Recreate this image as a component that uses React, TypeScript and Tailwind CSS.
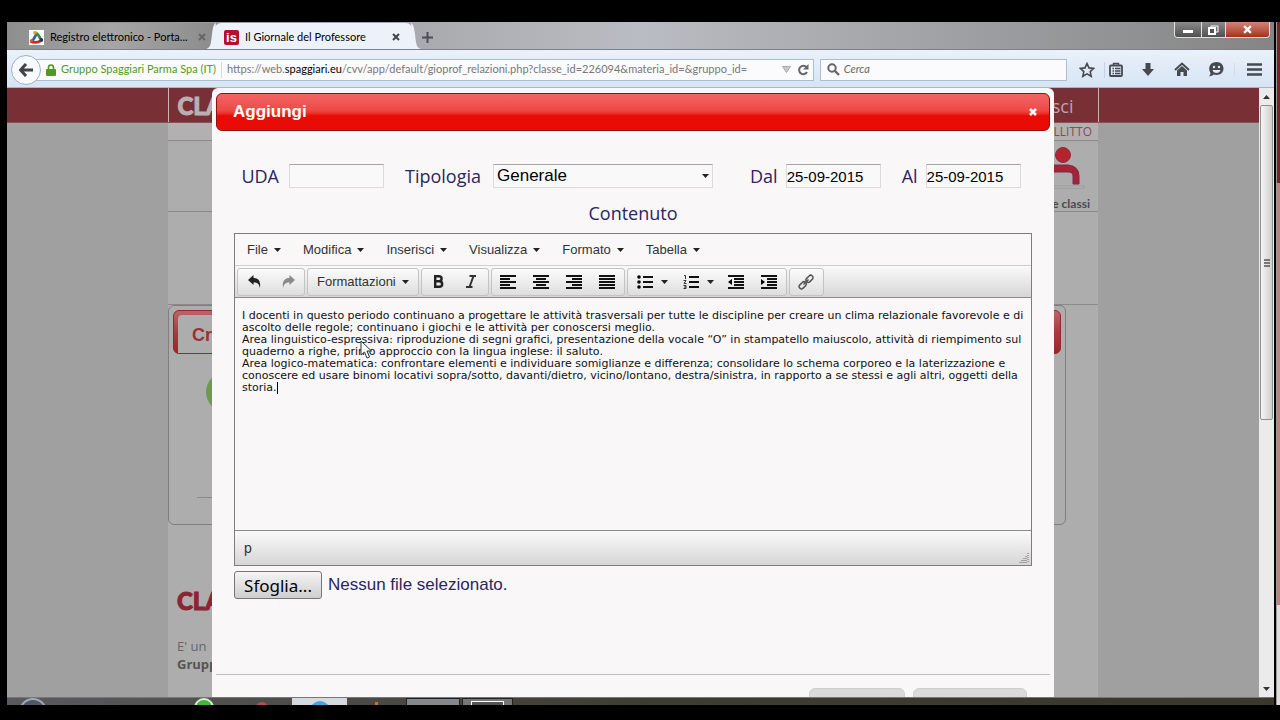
import React, { useRef } from 'react';

const ui = "font-['Open_Sans','Noto_Sans',sans-serif]";
const chrome = "font-['Lato','Open_Sans',sans-serif]";
const arial = "font-['Liberation_Sans',Arial,sans-serif]";

const Caret = () => (
  <svg width="7" height="4" viewBox="0 0 7 4" className="shrink-0">
    <path d="M0 0h7L3.500 4z" fill="#222" />
  </svg>
);

const CloseX = ({ color, size = 8 }: { color: string; size?: number }) => (
  <svg width={size} height={size} viewBox="0 0 8 8" className="shrink-0">
    <path d="M1 1l6 6M7 1L1 7" stroke={color} strokeWidth="2" />
  </svg>
);

/* ---------- browser chrome ---------- */

const WindowControls = () => (
  <div className="flex h-4 self-start overflow-hidden rounded-b-[4px] border border-t-0 border-[#e0e0e0] mr-1">
    <button aria-label="Riduci" className="flex w-[26px] items-center justify-center bg-linear-to-b from-[#8c8c8c] to-[#505050]">
      <span className="mt-1 h-[3px] w-[10px] bg-white" />
    </button>
    <button aria-label="Ripristina" className="flex w-[25px] items-center justify-center border-x border-[#e0e0e0] bg-linear-to-b from-[#8c8c8c] to-[#505050]">
      <svg width="11" height="10" viewBox="0 0 11 10">
        <path d="M3 2V1h7v6H8" fill="none" stroke="#fff" strokeWidth="1" />
        <rect x="1" y="3" width="6" height="6" fill="#555" stroke="#fff" strokeWidth="2" />
      </svg>
    </button>
    <button aria-label="Chiudi finestra" className="flex w-[43px] items-center justify-center bg-linear-to-b from-[#cf8478] to-[#a82d1a]">
      <CloseX color="#fff" size={9} />
    </button>
  </div>
);

const TabBar = () => (
  <div
    className={`flex h-7 items-end border-b border-[#7c8088] bg-linear-to-r from-[#8a8a8a] via-[#b9bcc2] to-[#858585] text-[11px] text-black ${chrome}`}
  >
    <div className="flex h-[26px] w-[208px] items-center rounded-t bg-linear-to-r from-[#8e8e8e] via-[#a6a6a6] to-[#8c8c8c] pt-[2px] pl-[22px] pr-[9px]">
      <svg width="15" height="15" viewBox="0 0 15 15" className="mr-[6px] shrink-0">
        <rect width="15" height="15" fill="#fff" />
        <path d="M8 3L3.500 11" stroke="#2f5fb5" strokeWidth="2.600" />
        <path d="M6 2.500q4 2 5.500 6.500" fill="none" stroke="#2f8f3c" strokeWidth="2.600" />
        <path d="M1.500 11.500q5 2 10-.5" fill="none" stroke="#d3261f" strokeWidth="2.600" />
        <circle cx="6" cy="2.800" r="1.800" fill="#d9a41c" />
        <circle cx="12.300" cy="10" r="1.900" fill="#2b2a66" />
        <circle cx="2.500" cy="10.500" r="1.600" fill="#e0571c" />
      </svg>
      <span className="flex-1 whitespace-nowrap">Registro elettronico - Porta...</span>
      <button aria-label="Chiudi scheda">
        <CloseX color="#666" />
      </button>
    </div>
    <div className="relative flex h-[26px] w-[197px] items-center rounded-t-[6px] bg-[#edf2fa] pt-[2px] pl-[9px] pr-3">
      <svg width="10" height="26" viewBox="0 0 10 27" className="absolute bottom-0 -left-[9px]">
        <path d="M0 27C5 26 5 20 6 12 7 4 8 1 10 0v27z" fill="#edf2fa" />
      </svg>
      <svg width="10" height="26" viewBox="0 0 10 27" className="absolute bottom-0 -right-[9px]">
        <path d="M10 27C5 26 5 20 4 12 3 4 2 1 0 0v27z" fill="#edf2fa" />
      </svg>
      <span
        aria-hidden="true"
        className={`mr-[6px] flex size-[15px] items-center justify-center rounded-[2px] bg-[#b3122e] text-[13px] leading-none font-bold text-white ${arial}`}
      >
        is
      </span>
      <span className="flex-1 whitespace-nowrap">Il Giornale del Professore</span>
      <button aria-label="Chiudi scheda">
        <CloseX color="#444" />
      </button>
    </div>
    <button aria-label="Nuova scheda" className="ml-[10px] flex h-[26px] w-5 items-center pt-[2px]">
      <svg width="11" height="11" viewBox="0 0 11 11">
        <path d="M5.500 0v11M0 5.500h11" stroke="#4c4f55" strokeWidth="2" />
      </svg>
    </button>
    <div className="flex-1" />
    <WindowControls />
  </div>
);

const NavIcons = () => (
  <div className="flex items-center text-[#454a50]">
    <button aria-label="Preferiti" className="w-[29px] pl-1">
      <svg width="16" height="16" viewBox="0 0 16 16">
        <path d="M8 1.500l2 4.400 4.700.5-3.500 3.200 1 4.700L8 11.900l-4.200 2.400 1-4.700L1.300 6.400 6 5.900z" fill="none" stroke="currentColor" strokeWidth="1.600" />
      </svg>
    </button>
    <button aria-label="Segnalibri" className="w-[33px] border-l border-[#c6d2e0] pl-1">
      <svg width="14" height="16" viewBox="0 0 14 16">
        <rect x="1" y="3.500" width="12" height="10.500" rx="1" fill="none" stroke="currentColor" strokeWidth="1.800" />
        <path d="M4.500 3V1.500h5V3M3.500 6.500h1.500M6 6.500h5.500M3.500 9h1.500M6 9h5.500M3.500 11.500h1.500M6 11.500h5.500" fill="none" stroke="currentColor" strokeWidth="1.400" />
      </svg>
    </button>
    <button aria-label="Download" className="w-[33px] pl-1">
      <svg width="14" height="14" viewBox="0 0 14 14">
        <path d="M4.500 0h5v6H13L7 13 1 6h3.500z" fill="currentColor" />
      </svg>
    </button>
    <button aria-label="Pagina iniziale" className="w-[34px] pl-1">
      <svg width="16" height="15" viewBox="0 0 16 15">
        <path d="M1 8l7-6.500L15 8" fill="none" stroke="currentColor" strokeWidth="2" />
        <path d="M3 8.500l5-4.500 5 4.500V14H9.500v-4h-3v4H3z" fill="currentColor" />
      </svg>
    </button>
    <button aria-label="Chat" className="w-[30px] pl-1">
      <svg width="16" height="15" viewBox="0 0 16 15">
        <path d="M8.500 0C12.600 0 15.500 2.800 15.500 6.500S12.600 13 8.500 13c-1 0-2-.2-2.900-.5C4.500 13.600 2.500 14.500 1 14.200c1-.8 1.500-2 1.500-3.200C1.800 9.800 1.200 8.200 1.200 6.500 1.200 2.800 4.400 0 8.500 0z" fill="currentColor" />
        <circle cx="6" cy="5" r="1.200" fill="#e3edf8" />
        <circle cx="11" cy="5" r="1.200" fill="#e3edf8" />
        <path d="M4.500 8h8c-.5 2-2 3-4 3s-3.500-1-4-3z" fill="#e3edf8" />
      </svg>
    </button>
    <button aria-label="Menu" className="border-l border-[#d2dce8] pl-3">
      <svg width="15" height="13" viewBox="0 0 15 13">
        <path d="M0 1.500h15M0 6.500h15M0 11.500h15" stroke="currentColor" strokeWidth="2.400" />
      </svg>
    </button>
  </div>
);

const NavBar = () => (
  <div className={`flex h-[38px] items-center border-b border-[#a9b6c6] bg-linear-to-b from-[#eaf1fa] to-[#d6e4f4] pt-[2px] pl-1 pr-3 text-[11px] ${chrome}`}>
    <button
      aria-label="Indietro"
      className="z-10 -mr-[2px] flex size-[30px] shrink-0 items-center justify-center rounded-full border border-[#9fb0c4] bg-[#f7f9fc]"
    >
      <svg width="14" height="14" viewBox="0 0 14 14">
        <path d="M7 1L1.500 7 7 13M2 7h12" fill="none" stroke="#3f444a" strokeWidth="3" />
      </svg>
    </button>
    <div className="-ml-1 flex h-[22px] flex-[779] items-center border border-[#a9bfd6] bg-[#fbfbfd] pl-[10px]">
      <svg width="10" height="12" viewBox="0 0 10 12" className="mr-[5px] shrink-0">
        <path d="M2.500 6V3.500a2.500 2.500 0 015 0V6" fill="none" stroke="#4f9a1c" strokeWidth="1.600" />
        <rect y="5" width="10" height="7" rx="1" fill="#4f9a1c" />
      </svg>
      <span className="whitespace-nowrap text-[#4f9a1c]">Gruppo Spaggiari Parma Spa (IT)</span>
      <span className="mx-[5px] h-4 w-px bg-[#d5d8dc]" />
      <div role="textbox" aria-label="Indirizzo" className="flex-1 whitespace-nowrap text-[#777]">
        https://web.<span className="text-black">spaggiari.eu</span>
        /cvv/app/default/gioprof_relazioni.php?classe_id=226094&amp;materia_id=&amp;gruppo_id=
      </div>
      <svg width="9" height="7" viewBox="0 0 9 7" className="mr-[6px] shrink-0">
        <path d="M.5.500h8l-4 6z" fill="#c9c9c9" stroke="#aaa" />
      </svg>
      <button aria-label="Ricarica" className="mr-1">
        <svg width="12" height="12" viewBox="0 0 12 12">
          <path d="M9.500 3.200A4.200 4.200 0 1010 8" fill="none" stroke="#666" strokeWidth="2" />
          <path d="M11.500 0v5.500H6z" fill="#666" />
        </svg>
      </button>
    </div>
    <label className="mr-2 ml-[6px] flex h-[22px] flex-[243] items-center border border-[#a9bfd6] bg-[#fbfbfd] pl-[6px]">
      <svg width="13" height="13" viewBox="0 0 13 13" className="mr-1 shrink-0">
        <circle cx="5" cy="5" r="3.700" fill="none" stroke="#666" strokeWidth="2" />
        <path d="M8 8l4 4" stroke="#666" strokeWidth="2.400" />
      </svg>
      <input aria-label="Cerca" placeholder="Cerca" className="w-full min-w-0 bg-transparent outline-none placeholder:text-[#666] placeholder:italic" />
    </label>
    <NavIcons />
  </div>
);

const ScrollBar = () => (
  <div className="flex w-[15px] shrink-0 flex-col items-center bg-[#ebebeb]">
    <button aria-label="Scorri su" className="flex h-[17px] items-center">
      <svg width="7" height="4" viewBox="0 0 7 4">
        <path d="M0 4h7L3.500 0z" fill="#333" />
      </svg>
    </button>
    <div className="flex w-[13px] flex-[315] items-center justify-center rounded-[2px] border border-[#8f8f8f] bg-linear-to-r from-[#f5f5f5] to-[#cfcfcf]">
      <svg width="6" height="8" viewBox="0 0 6 8">
        <path d="M0 1h6M0 4h6M0 7h6" stroke="#555" strokeWidth="1.500" />
      </svg>
    </div>
    <div className="flex-[262]" />
    <button aria-label="Scorri giù" className="flex h-4 items-center">
      <svg width="7" height="4" viewBox="0 0 7 4">
        <path d="M0 0h7L3.500 4z" fill="#333" />
      </svg>
    </button>
  </div>
);

/* ---------- page under the dialog ---------- */

const logo = "font-['Lato',sans-serif] text-2xl font-black [-webkit-text-stroke:1px]";

const PageBehind = () => (
  <div className={`h-full bg-[#a0a0a0] ${ui}`}>
    <div className="h-[35px] border-b border-[#8d5055] bg-[#782f36]">
      <div className="mx-auto flex h-full max-w-[931px] items-center justify-between border-x border-[#c9b5b7] pt-[2px] pr-6 pl-[9px]">
        <span className={`text-[#b9b0b1] ${logo}`}>CLA</span>
        <a href="#esci" className="text-lg text-[#b9a6a8]">sci</a>
      </div>
    </div>
    <div className="mx-auto h-full max-w-[930px] bg-[#adadad]">
      <div className="flex h-[18px] items-center justify-end border-b border-[#8a8a8a] bg-[#b2b0b0] pr-[6px] text-xs text-[#8b4a50]">
        LLITTO
      </div>
      <div className="flex h-[71px] justify-end border-b border-[#8a8a8a] pr-2">
        <div className="flex flex-col items-end justify-between pt-[6px]">
          <svg width="52" height="42" viewBox="0 0 52 42" className="mr-[2px]">
            <circle cx="27" cy="8" r="7.500" fill="#b3242c" stroke="#8c2b45" />
            <path d="M12 18h20q11 1 11 11v8h-6v-8q0-4-5-4H12z" fill="#a52335" stroke="#7d2b50" />
            <path d="M6 39h42v2H6z" fill="#bbb" stroke="#888" strokeWidth=".6" />
          </svg>
          <span className="font-['Lato',sans-serif] text-xs leading-[15px] font-bold text-[#4a4a4a]">e classi</span>
        </div>
      </div>
      <div className="h-[93px] border-b border-[#8a8a8a]" />
      <div className="mr-8 h-[220px] rounded-md border border-[#7f7f7f] p-1">
        <div className="h-11 rounded-md border border-[#8f2a2f] bg-linear-to-b from-[#bb6468] via-[#a83b40] to-[#a02227] pt-1 pl-1">
          <div className={`h-full w-40 rounded-t bg-[#adadad] pt-[6px] pl-[14px] text-lg leading-7 font-bold text-[#a02f33] ${arial}`}>Cr</div>
        </div>
        <div className="pt-[18px] pl-[33px]">
          <div className="size-10 rounded-full bg-[#6f9a4c]" />
        </div>
        <div className="mt-[85px] ml-6 w-40 border-b border-[#8a8a8a]" />
      </div>
      <div className="px-[9px] pt-[60px] text-[13px] leading-[18px] text-[#666]">
        <p className={`mb-5 text-[#8c2532] ${logo}`}>CLA</p>
        <p>E' un</p>
        <p className="font-bold text-[#555]">Grupp</p>
      </div>
    </div>
  </div>
);

/* ---------- editor ---------- */

const menus = ['File', 'Modifica', 'Inserisci', 'Visualizza', 'Formato', 'Tabella'];

interface ToolProps {
  label: string;
  wide?: boolean;
  children: React.ReactNode;
}

const Tool = ({ label, wide, children }: ToolProps) => (
  <button aria-label={label} className={`flex h-[26px] items-center justify-center gap-2 ${wide ? 'w-[46px] pl-1' : 'w-[33px]'}`}>
    {children}
  </button>
);

const ToolGroup = ({ children }: { children: React.ReactNode }) => (
  <div className="flex h-7 shrink-0 rounded-[3px] border border-[#c3c3c3] bg-linear-to-b from-[#fbfbfb] to-[#dedede]">{children}</div>
);

const Lines = ({ d }: { d: string }) => (
  <svg width="16" height="14" viewBox="0 0 16 14">
    <path d={d} stroke="#111" strokeWidth="2" />
  </svg>
);

const Toolbar = () => (
  <div className="flex h-[33px] items-center gap-[2px] overflow-hidden border-y border-t-[#cfcfcf] border-b-[#8b8b8b] bg-linear-to-b from-[#fafafa] to-[#d6d6d6] px-[2px]">
    <ToolGroup>
      <Tool label="Annulla">
        <svg width="14" height="13" viewBox="0 0 14 13">
          <path d="M0 5l5.500-5v3C10 3 13 5.500 12 13 11 9 9.500 7.500 5.500 7.500V10z" fill="#222" />
        </svg>
      </Tool>
      <Tool label="Ripeti">
        <svg width="14" height="13" viewBox="0 0 14 13">
          <path d="M14 5L8.500 0v3C4 3 1 5.500 2 13c1-4 2.500-5.500 6.500-5.500V10z" fill="#8a8a8a" />
        </svg>
      </Tool>
    </ToolGroup>
    <ToolGroup>
      <button className="flex items-center gap-[6px] px-[9px]">
        Formattazioni <Caret />
      </button>
    </ToolGroup>
    <ToolGroup>
      <Tool label="Grassetto">
        <svg width="11" height="13" viewBox="0 0 11 13">
          <path d="M2.200 1.200h3.600q2.800 0 2.800 2.500T5.800 6.300H2.200zM2.200 6.300h4q3 0 3 2.700t-3 2.700h-4z" fill="none" stroke="#222" strokeWidth="2.400" />
        </svg>
      </Tool>
      <Tool label="Corsivo">
        <svg width="12" height="13" viewBox="0 0 12 13">
          <path d="M4.500 1H11M1 12h6.500M8.500 1l-4 11" fill="none" stroke="#333" strokeWidth="2" />
        </svg>
      </Tool>
    </ToolGroup>
    <ToolGroup>
      <Tool label="Allinea a sinistra"><Lines d="M0 1h16M0 4h10M0 7h16M0 10h10M0 13h16" /></Tool>
      <Tool label="Centra"><Lines d="M0 1h16M3 4h10M0 7h16M3 10h10M0 13h16" /></Tool>
      <Tool label="Allinea a destra"><Lines d="M0 1h16M6 4h10M0 7h16M6 10h10M0 13h16" /></Tool>
      <Tool label="Giustifica"><Lines d="M0 1h16M0 4h16M0 7h16M0 10h16M0 13h16" /></Tool>
    </ToolGroup>
    <ToolGroup>
      <Tool label="Elenco puntato" wide>
        <svg width="16" height="14" viewBox="0 0 16 14">
          <path d="M6 2h10M6 7h10M6 12h10" stroke="#111" strokeWidth="2" />
          <circle cx="2" cy="2" r="1.800" />
          <circle cx="2" cy="7" r="1.800" />
          <circle cx="2" cy="12" r="1.800" />
        </svg>
        <Caret />
      </Tool>
      <Tool label="Elenco numerato" wide>
        <svg width="16" height="14" viewBox="0 0 16 14">
          <path d="M6 2h10M6 7h10M6 12h10" stroke="#111" strokeWidth="2" />
          <path d="M1 .5h1.500V4M.5 5.500h2.500L1 8.500h2.500M.5 10.500H3v3H.5M1 12h2" fill="none" stroke="#333" strokeWidth="1" />
        </svg>
        <Caret />
      </Tool>
      <Tool label="Riduci rientro">
        <svg width="16" height="14" viewBox="0 0 16 14">
          <path d="M0 1h16M6 4h10M6 7h10M6 10h10M0 13h16" stroke="#111" strokeWidth="2" />
          <path d="M4 4v6L0 7z" />
        </svg>
      </Tool>
      <Tool label="Aumenta rientro">
        <svg width="16" height="14" viewBox="0 0 16 14">
          <path d="M0 1h16M6 4h10M6 7h10M6 10h10M0 13h16" stroke="#111" strokeWidth="2" />
          <path d="M0 4v6l4-3z" />
        </svg>
      </Tool>
    </ToolGroup>
    <ToolGroup>
      <Tool label="Inserisci link">
        <svg width="16" height="16" viewBox="0 0 16 16" fill="none" stroke="#555" strokeWidth="1.500">
          <rect x="7.500" y="2.500" width="8" height="4.600" rx="2.300" transform="rotate(-45 11.500 4.800)" />
          <rect x=".7" y="9" width="8" height="4.600" rx="2.300" transform="rotate(-45 4.700 11.300)" />
          <path d="M5.500 10.500l5-5" />
        </svg>
      </Tool>
    </ToolGroup>
  </div>
);

const lines = [
  'I docenti in questo periodo continuano a progettare le attività trasversali per tutte le discipline per creare un clima relazionale favorevole e di',
  'ascolto delle regole; continuano i giochi e le attività per conoscersi meglio.',
  'Area linguistico-espressiva: riproduzione di segni grafici, presentazione della vocale “O” in stampatello maiuscolo, attività di riempimento sul',
  'quaderno a righe, primo approccio con la lingua inglese: il saluto.',
  'Area logico-matematica: confrontare elementi e individuare somiglianze e differenza; consolidare lo schema corporeo e la laterizzazione e',
  'conoscere ed usare binomi locativi sopra/sotto, davanti/dietro, vicino/lontano, destra/sinistra, in rapporto a se stessi e agli altri, oggetti della',
  'storia.',
];

const Editor = () => (
  <div className={`border border-[#7d7d7d] text-[13px] text-[#333] ${arial}`}>
    <div className="flex h-[31px] items-center gap-[22px] px-3">
      {menus.map((menu) => (
        <button key={menu} className="flex items-center gap-[6px]">
          {menu}
          <Caret />
        </button>
      ))}
    </div>
    <Toolbar />
    <div className="relative h-[232px] overflow-hidden px-[7px] pt-3">
      <div
        role="textbox"
        aria-label="Contenuto"
        aria-multiline="true"
        className="font-['DejaVu_Sans',Verdana,sans-serif] text-[11px] leading-3 whitespace-nowrap text-[#111]"
      >
        {lines.map((line, i) => (
          <p key={line} className="flex">
            {line}
            {i === lines.length - 1 && <span className="h-3 w-px bg-black" />}
          </p>
        ))}
      </div>
      <svg width="12" height="19" viewBox="0 0 12 19" className="absolute top-[42px] left-[125px]">
        <path d="M1 1v14l3.500-3 2.500 6 2.500-1L7 11h4.500z" fill="#fff" stroke="#333" strokeWidth="1" />
      </svg>
    </div>
    <div className="flex h-[35px] items-center justify-between border-t border-[#8b8b8b] bg-linear-to-b from-[#fafafa] to-[#d6d6d6] pr-[2px] pl-[9px] text-[14px]">
      <span>p</span>
      <svg width="10" height="10" viewBox="0 0 10 10" className="mb-[2px] self-end">
        <path d="M9 0v10M7 3v7M5 5v5M3 7v3M1 9v1" stroke="#666" strokeDasharray="1 1" />
      </svg>
    </div>
  </div>
);

/* ---------- dialog ---------- */

const field = `h-6 border border-[#dcdadc] border-t-[#a5a5a5] bg-[#faf9fa] text-black outline-none ${arial}`;

const FormRow = () => (
  <div className="flex items-center justify-center gap-[21px] pr-1 text-lg">
    <label className="flex items-center gap-[10px]">
      UDA
      <input className={`w-[95px] text-[15px] ${field}`} />
    </label>
    <label className="flex items-center gap-3">
      Tipologia
      <span className="relative flex items-center">
        <select className={`w-[220px] appearance-none pl-[3px] text-[17px] leading-[22px] ${field}`}>
          <option>Generale</option>
        </select>
        <span className="pointer-events-none absolute right-1">
          <Caret />
        </span>
      </span>
    </label>
    <label className="ml-4 flex items-center gap-2">
      Dal
      <input defaultValue="25-09-2015" className={`w-[95px] text-[15px] ${field}`} />
    </label>
    <label className="flex items-center gap-2">
      Al
      <input defaultValue="25-09-2015" className={`w-[95px] text-[15px] ${field}`} />
    </label>
  </div>
);

const FilePicker = () => {
  const fileRef = useRef<HTMLInputElement>(null);

  return (
    <div className={`mt-[5px] flex items-center gap-[6px] text-[17px] ${arial}`}>
      <button
        onClick={() => fileRef.current?.click()}
        className="h-7 w-[88px] rounded-[3px] border border-[#777] bg-linear-to-b from-[#f4f4f4] to-[#cfcfcf] font-['Noto_Sans',sans-serif] leading-none text-black"
      >
        Sfoglia...
      </button>
      <input ref={fileRef} type="file" aria-label="File" className="hidden" />
      <span>Nessun file selezionato.</span>
    </div>
  );
};

const Dialog = () => (
  <div
    role="dialog"
    aria-label="Aggiungi"
    className={`flex h-full w-full max-w-[842px] flex-col rounded-t-md bg-[#f9f7f8] px-1 pt-[5px] text-[#2b2560] ${ui}`}
  >
    <div className={`flex h-[38px] shrink-0 items-center justify-between rounded-md border border-[#8f1010] bg-linear-to-b from-[#f06464] via-[#ee4a47] via-45% to-[#e90b05] to-60% pr-3 pl-4 text-[17px] font-bold text-white ${arial}`}>
      <h1>Aggiungi</h1>
      <button aria-label="Chiudi">
        <svg width="8" height="8" viewBox="0 0 8 8">
          <path d="M1 1l6 6M7 1L1 7" stroke="#fff" strokeWidth="2.600" />
        </svg>
      </button>
    </div>
    <div className="shrink-0 px-[18px] pt-[31px]">
      <FormRow />
      <h2 className="mt-[7px] mb-1 text-center text-lg leading-8">Contenuto</h2>
      <Editor />
      <FilePicker />
    </div>
    <div className="mt-[75px] flex justify-end gap-2 border-t border-[#bdbdbd] pt-[13px] pr-[23px]">
      <button aria-label="Salva" className="h-8 w-24 rounded-md border border-[#cfcfcf] bg-[#dadada]" />
      <button aria-label="Annulla" className="h-8 w-[114px] rounded-md border border-[#cfcfcf] bg-[#dadada]" />
    </div>
  </div>
);

const TaskBar = () => (
  <div className="flex h-2 shrink-0 overflow-hidden border-t border-[#777] bg-linear-to-r from-[#5a5a5e] via-[#3f3d33] to-[#3a372c]">
    <div className="ml-3 size-7 rounded-full border-2 border-[#9ab] bg-[#556]" />
    <div className="ml-[147px] size-5 rounded-full border-2 border-[#d8f0d0] bg-[#45b53c]" />
    <div className="mt-1 ml-[42px] size-3 rounded-full bg-[#b5524a]" />
    <div className="ml-6 flex h-7 w-[55px] justify-center bg-[#d6dade] pt-[3px]">
      <div className="size-5 rounded-full bg-[#4ba3d6]" />
    </div>
    <div className="mt-1 ml-7 h-3 w-[3px] bg-[#c9702a]" />
    <div className="ml-[28px] h-7 w-[54px] border border-[#222] bg-[#85888a]" />
    <div className="ml-[2px] h-7 w-[51px] border border-[#222] bg-[#777] px-2 pt-[2px]">
      <div className="h-5 border border-white bg-[#555]" />
    </div>
  </div>
);

const App: React.FC = () => (
  <div className="flex h-screen overflow-hidden bg-black pt-[22px] pb-[15px] pl-[7px]">
    <div className="flex min-w-0 flex-1 flex-col">
      <TabBar />
      <NavBar />
      <div className="flex min-h-0 flex-1">
        <div className="relative min-w-0 flex-1 overflow-hidden">
          <PageBehind />
          <div className="absolute inset-0 flex justify-center">
            <Dialog />
          </div>
        </div>
        <ScrollBar />
      </div>
      <TaskBar />
    </div>
    <div className="ml-[2px] flex w-1 flex-col border-l border-[#999]">
      <div className="flex-[160] bg-[#7d1f2a]" />
      <div className="flex-[420] bg-[#c08084]" />
      <div className="flex-[100] bg-[#ddd]" />
    </div>
  </div>
);

export default App;
